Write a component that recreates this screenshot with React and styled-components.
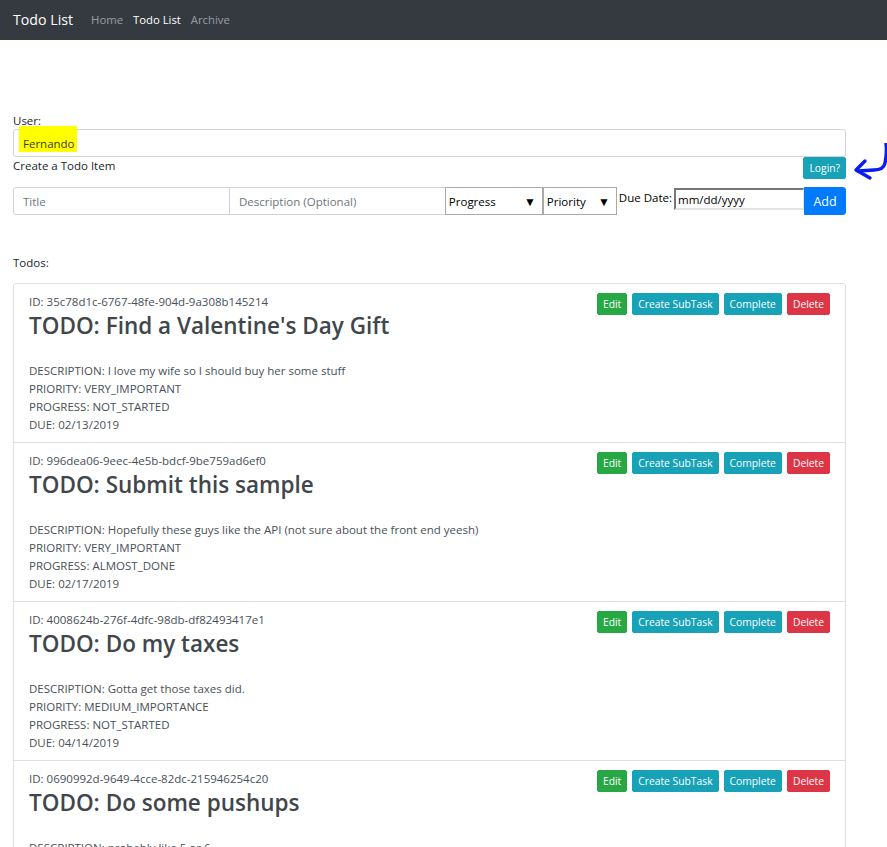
import styled, { createGlobalStyle } from "styled-components";

const GlobalStyle = createGlobalStyle`
  html, body {
    margin: 0;
    padding: 0;
    background: #fff;
  }
  body {
    font-family: "Open Sans", "Noto Sans", sans-serif;
    font-size: 11.5px;
    line-height: 1.5;
    color: #212529;
  }
  * {
    box-sizing: border-box;
  }
`;

const todos = [
  {
    id: "35c78d1c-6767-48fe-904d-9a308b145214",
    title: "Find a Valentine's Day Gift",
    description: "I love my wife so I should buy her some stuff",
    priority: "VERY_IMPORTANT",
    progress: "NOT_STARTED",
    due: "02/13/2019",
  },
  {
    id: "996dea06-9eec-4e5b-bdcf-9be759ad6ef0",
    title: "Submit this sample",
    description: "Hopefully these guys like the API (not sure about the front end yeesh)",
    priority: "VERY_IMPORTANT",
    progress: "ALMOST_DONE",
    due: "02/17/2019",
  },
  {
    id: "4008624b-276f-4dfc-98db-df82493417e1",
    title: "Do my taxes",
    description: "Gotta get those taxes did.",
    priority: "MEDIUM_IMPORTANCE",
    progress: "NOT_STARTED",
    due: "04/14/2019",
  },
  {
    id: "0690992d-9649-4cce-82dc-215946254c20",
    title: "Do some pushups",
    description: "probably like 5 or 6",
    priority: "LOW_IMPORTANCE",
    progress: "NOT_STARTED",
    due: "02/20/2019",
  },
];

const App = () => {
  return (
    <>
      <GlobalStyle />
      <Navbar>
        <Brand>Todo List</Brand>
        <NavLink>Home</NavLink>
        <NavLink active>Todo List</NavLink>
        <NavLink>Archive</NavLink>
      </Navbar>
      <Container>
        <Label>User:</Label>
        <UserBox>
          <Highlight>Fernando</Highlight>
        </UserBox>
        <CreateRow>
          <span>Create a Todo Item</span>
          <LoginWrap>
            <SmallBtn color="#17a2b8">Login?</SmallBtn>
            <Scribble width="40" height="42" viewBox="0 0 40 42">
              <path
                d="M36 1 C37 8 36 15 35 20 C34 25 30 27 24 27 L8 28"
                fill="none"
                stroke="#0a1cf0"
                strokeWidth="3.4"
                strokeLinecap="round"
                strokeLinejoin="round"
              />
              <path
                d="M15 18 L6 27 L20 35"
                fill="none"
                stroke="#0a1cf0"
                strokeWidth="3.4"
                strokeLinecap="round"
                strokeLinejoin="round"
              />
            </Scribble>
          </LoginWrap>
        </CreateRow>
        <InputGroup>
          <TextInput placeholder="Title" />
          <TextInput placeholder="Description (Optional)" />
          <SelectBox w="98px">
            <NativeSelect defaultValue="">
              <option value="">Progress</option>
            </NativeSelect>
            <Caret>▼</Caret>
          </SelectBox>
          <SelectBox w="74px">
            <NativeSelect defaultValue="">
              <option value="">Priority</option>
            </NativeSelect>
            <Caret>▼</Caret>
          </SelectBox>
          <DueLabel>Due Date:</DueLabel>
          <DateInput placeholder="mm/dd/yyyy" />
          <AddBtn>Add</AddBtn>
        </InputGroup>
        <TodosLabel>Todos:</TodosLabel>
        <List>
          {todos.map((t) => (
            <Item key={t.id}>
              <Actions>
                <SmallBtn color="#28a745">Edit</SmallBtn>
                <SmallBtn color="#17a2b8">Create SubTask</SmallBtn>
                <SmallBtn color="#17a2b8">Complete</SmallBtn>
                <SmallBtn color="#dc3545">Delete</SmallBtn>
              </Actions>
              <IdLine>ID: {t.id}</IdLine>
              <Title>TODO: {t.title}</Title>
              <Details>
                <div>DESCRIPTION: {t.description}</div>
                <div>PRIORITY: {t.priority}</div>
                <div>PROGRESS: {t.progress}</div>
                <div>DUE: {t.due}</div>
              </Details>
            </Item>
          ))}
        </List>
      </Container>
    </>
  );
};

export default App;

const Navbar = styled.nav`
  height: 40px;
  background-color: #343a40;
  display: flex;
  align-items: center;
  padding: 0 13px;
`;

const Brand = styled.div`
  color: #fff;
  font-size: 14.2px;
  margin-right: 13px;
`;

const NavLink = styled.div`
  color: ${(p) => (p.active ? "#fff" : "rgba(255, 255, 255, 0.5)")};
  font-size: 11.3px;
  padding: 0 5px;
`;

const Container = styled.div`
  width: 846px;
  padding: 0 0 0 13px;
  margin-top: 72px;
`;

const Label = styled.div`
  line-height: 17px;
`;

const UserBox = styled.div`
  height: 28px;
  border: 1px solid #ced4da;
  border-radius: 3px;
  display: flex;
  align-items: flex-start;
  padding-left: 5px;
`;

const Highlight = styled.span`
  background: #ffff00;
  margin-top: -4px;
  height: 26px;
  padding: 9px 2px 0 4px;
  line-height: 17px;
  color: #3a3a10;
`;

const CreateRow = styled.div`
  display: flex;
  justify-content: space-between;
  align-items: flex-start;
  height: 30px;
`;

const LoginWrap = styled.div`
  position: relative;
`;

const Scribble = styled.svg`
  position: absolute;
  left: 47px;
  top: -14px;
`;

const SmallBtn = styled.button`
  background-color: ${(p) => p.color};
  border: 1px solid ${(p) => p.color};
  color: #fff;
  font-family: inherit;
  font-size: 10.3px;
  line-height: 14px;
  padding: 3px 5px;
  border-radius: 2px;
  cursor: pointer;
`;

const InputGroup = styled.div`
  display: flex;
  align-items: flex-start;
  height: 28px;
`;

const TextInput = styled.input`
  flex: 1;
  min-width: 0;
  height: 28px;
  border: 1px solid #ced4da;
  font-family: inherit;
  font-size: 11.5px;
  padding: 0 9px;
  color: #495057;
  margin-right: -1px;
  &:first-child {
    border-radius: 3px 0 0 3px;
  }
  &::placeholder {
    color: #6c757d;
  }
`;

const SelectBox = styled.div`
  position: relative;
  width: ${(p) => p.w};
  height: 28px;
`;

const NativeSelect = styled.select`
  appearance: none;
  width: 100%;
  height: 28px;
  border: 1px solid #a9a9a9;
  border-radius: 0;
  background: #fff;
  font-family: inherit;
  font-size: 11.5px;
  color: #000;
  padding: 0 3px;
`;

const Caret = styled.span`
  position: absolute;
  right: 7px;
  top: 6px;
  font-size: 12px;
  color: #000;
  pointer-events: none;
`;

const DueLabel = styled.span`
  color: #000;
  margin: 2px 2px 0 2px;
  white-space: nowrap;
`;

const DateInput = styled.input`
  width: 130px;
  height: 22px;
  margin-top: 1px;
  border-style: solid;
  border-width: 2px 1px 2px 2px;
  border-color: #767676 #e3e3e3 #e3e3e3 #767676;
  font-family: inherit;
  font-size: 11.5px;
  padding: 0 2px;
  &::placeholder {
    color: #000;
  }
`;

const AddBtn = styled.button`
  width: 42px;
  height: 28px;
  background-color: #007bff;
  border: 1px solid #007bff;
  color: #fff;
  font-family: inherit;
  font-size: 12.5px;
  border-radius: 0 3px 3px 0;
  padding: 0;
`;

const TodosLabel = styled.div`
  margin-top: 39px;
  line-height: 18px;
`;

const List = styled.div`
  margin-top: 11px;
  display: flex;
  flex-direction: column;
`;

const Item = styled.div`
  border: 1px solid #dfdfdf;
  padding: 9px 15px;
  margin-bottom: -1px;
  color: #495057;
  height: 160px;
  &:first-child {
    border-radius: 3px 3px 0 0;
  }
`;

const Actions = styled.div`
  float: right;
  display: flex;
  gap: 5px;
`;

const IdLine = styled.div`
  line-height: 18px;
`;

const Title = styled.h2`
  margin: 0;
  font-size: 22.5px;
  font-weight: 600;
  line-height: 29px;
  color: #41464b;
`;

const Details = styled.div`
  margin-top: 22px;
  line-height: 18px;
`;
